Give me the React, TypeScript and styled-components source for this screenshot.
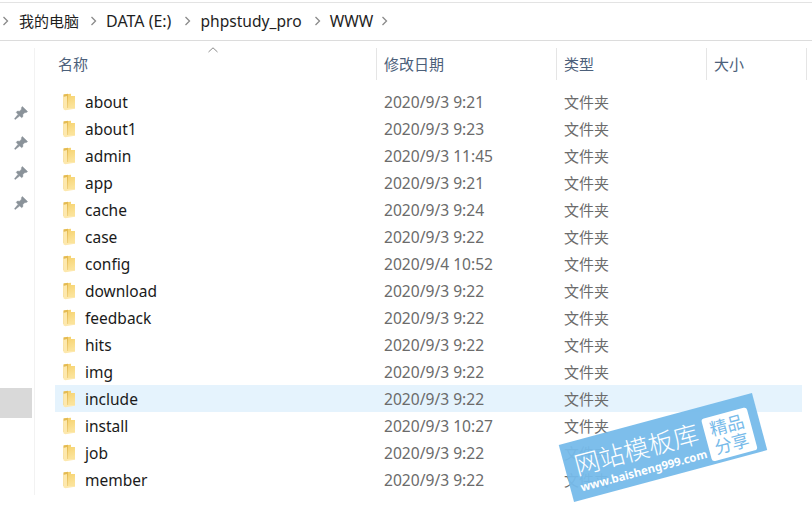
import React from 'react'
import styled, { createGlobalStyle } from 'styled-components'

const Global = createGlobalStyle`
  html, body {
    margin: 0;
    background: #fff;
  }
  body {
    font-family: "Noto Sans", "Noto Sans CJK SC", sans-serif;
    overflow: hidden;
  }
`

const Page = styled.div`
  position: relative;
  width: 812px;
  height: 511px;
  padding-top: 2px;
  box-sizing: border-box;
  overflow: hidden;
`
const Breadcrumb = styled.div`
  display: flex;
  align-items: center;
  height: 35px;
  padding: 0 0 2px 2px;
  border-top: 1px solid #e3e3e3;
  border-bottom: 1px solid #dcdcdc;
  color: #1e1e1e;
`
const Crumb = styled.span<{ $left: number; $right: number; $size?: number }>`
  margin: 0 ${(p) => p.$right}px 0 ${(p) => p.$left}px;
  font-size: ${(p) => p.$size || 15.6}px;
  white-space: nowrap;
`
const Chevron = () => (
  <svg width="7" height="10" viewBox="0 0 7 10" fill="none">
    <path d="M1.5 1 L5.5 5 L1.5 9" stroke="#8a8a8a" strokeWidth="1.3" />
  </svg>
)

const Body = styled.div`
  display: flex;
  padding-top: 7px;
`
const Sidebar = styled.aside`
  width: 34px;
  height: 397px;
  flex: none;
  border-right: 1px solid #f2f2f2;
  padding-top: 50px;
`
const PinSlot = styled.div`
  display: flex;
  align-items: center;
  justify-content: center;
  width: 34px;
  height: 30px;
  padding-left: 8px;
  box-sizing: border-box;
`
const Selected = styled.div`
  width: 32px;
  height: 30px;
  margin-top: 170px;
  background: #d9d9d9;
`
const Pin = () => (
  <svg width="14" height="14" viewBox="0 0 14 14">
    <path
      d="M8.4 0.4 L13.6 5.6 L12 6.8 L11 6.4 L8.8 8.4 L9 10.6 L7.6 11.8 L2.2 6.4 L3.4 5 L5.6 5.2 L7.6 3 L7.2 1.9 Z M4 8.4 L5.6 10 L1.2 13.6 L0.4 12.8 Z"
      fill="#8a9299"
      stroke="#8a9299"
      strokeWidth="0.4"
    />
  </svg>
)

const Main = styled.main`
  flex: 1;
  padding-left: 20px;
`
const Header = styled.div`
  position: relative;
  display: grid;
  grid-template-columns: 322px 180px 150px 100px;
  height: 32px;
  margin-bottom: 8px;
`
const HeaderCell = styled.div<{ $first?: boolean }>`
  display: flex;
  align-items: center;
  height: 32px;
  padding: 0 0 2px ${(p) => (p.$first ? '3px' : '7px')};
  box-sizing: border-box;
  border-right: 1px solid #e5e5e5;
  font-size: 15px;
  color: #4c607a;
`
const SortCaret = styled.svg`
  position: absolute;
  left: 153px;
  top: -1px;
`
const Rows = styled.div`
  display: flex;
  flex-direction: column;
`
const Row = styled.div<{ $active?: boolean }>`
  display: grid;
  grid-template-columns: 322px 180px 150px 1fr;
  align-items: center;
  height: 27px;
  width: 747px;
  background: ${(p) => (p.$active ? '#e5f3fd' : 'transparent')};
`
const NameCell = styled.div`
  display: flex;
  align-items: center;
  gap: 10px;
  padding-left: 8px;
  font-size: 15.5px;
  color: #1a1a1a;
`
const MetaCell = styled.div<{ $size: number }>`
  padding-left: 7px;
  color: #6b6b6b;
  font-size: ${(p) => p.$size}px;
  white-space: nowrap;
`
const Folder = () => (
  <svg width="12" height="18" viewBox="0 0 12 18" style={{ flex: 'none' }}>
    <defs>
      <linearGradient id="fold" x1="0" y1="0" x2="0.3" y2="1">
        <stop offset="0" stopColor="#f5cf66" />
        <stop offset="1" stopColor="#fbe39a" />
      </linearGradient>
    </defs>
    <path d="M0.6 1.4 L8 0.8 L8 3 L12 3 L12 15.4 L0.6 15.4 Z" fill="url(#fold)" />
    <path d="M0.6 1.4 L5 0.8 L5 15 L0.6 15 Z" fill="#e4ba52" />
    <path d="M0.2 4 L4 3 L4.5 15 L12 15 L12 15.8 L2.4 17.2 L0.6 16.6 Z" fill="#fde8ad" />
  </svg>
)

const Watermark = styled.div`
  position: absolute;
  left: 563px;
  top: 418px;
  width: 200px;
  height: 59px;
  display: flex;
  justify-content: space-between;
  padding: 0 9px 3px 10px;
  box-sizing: border-box;
  background: rgba(118, 186, 234, 0.95);
  transform: rotate(-15deg);
  color: #fff;
`
const MarkText = styled.div`
  display: flex;
  flex-direction: column;
  justify-content: flex-end;
  padding-bottom: 2px;
`
const MarkTitle = styled.div`
  font-size: 25.5px;
  line-height: 30px;
  font-weight: 300;
  white-space: nowrap;
`
const MarkUrl = styled.div`
  font-size: 11.4px;
  line-height: 15px;
  font-weight: 700;
  white-space: nowrap;
`
const MarkBadge = styled.div`
  align-self: flex-end;
  flex: none;
  width: 47px;
  height: 44px;
  border-radius: 3px;
  background: #fff;
  color: #78bbea;
  font-size: 17.5px;
  line-height: 19px;
  text-align: center;
  padding-top: 3px;
  box-sizing: border-box;
`

const folders: [string, string][] = [
  ['about', '2020/9/3 9:21'],
  ['about1', '2020/9/3 9:23'],
  ['admin', '2020/9/3 11:45'],
  ['app', '2020/9/3 9:21'],
  ['cache', '2020/9/3 9:24'],
  ['case', '2020/9/3 9:22'],
  ['config', '2020/9/4 10:52'],
  ['download', '2020/9/3 9:22'],
  ['feedback', '2020/9/3 9:22'],
  ['hits', '2020/9/3 9:22'],
  ['img', '2020/9/3 9:22'],
  ['include', '2020/9/3 9:22'],
  ['install', '2020/9/3 10:27'],
  ['job', '2020/9/3 9:22'],
  ['member', '2020/9/3 9:22']
]

const App = () => (
  <Page>
    <Global />
    <Breadcrumb>
      <Chevron />
      <Crumb $left={10} $right={11} $size={15}>
        我的电脑
      </Crumb>
      <Chevron />
      <Crumb $left={9} $right={13} $size={16}>
        DATA (E:)
      </Crumb>
      <Chevron />
      <Crumb $left={9} $right={12}>
        phpstudy_pro
      </Crumb>
      <Chevron />
      <Crumb $left={9} $right={8}>
        WWW
      </Crumb>
      <Chevron />
    </Breadcrumb>
    <Body>
      <Sidebar>
        {[0, 1, 2, 3].map((i) => (
          <PinSlot key={i}>
            <Pin />
          </PinSlot>
        ))}
        <Selected />
      </Sidebar>
      <Main>
        <Header>
          <HeaderCell $first>名称</HeaderCell>
          <HeaderCell>修改日期</HeaderCell>
          <HeaderCell>类型</HeaderCell>
          <HeaderCell>大小</HeaderCell>
          <SortCaret width="10" height="6" viewBox="0 0 10 6" fill="none">
            <path d="M0.5 5 L5 0.8 L9.5 5" stroke="#8a8a8a" />
          </SortCaret>
        </Header>
        <Rows>
          {folders.map(([name, date]) => (
            <Row key={name} $active={name === 'include'}>
              <NameCell>
                <Folder />
                {name}
              </NameCell>
              <MetaCell $size={15.6}>{date}</MetaCell>
              <MetaCell $size={15}>文件夹</MetaCell>
            </Row>
          ))}
        </Rows>
      </Main>
    </Body>
    <Watermark>
      <MarkText>
        <MarkTitle>网站模板库</MarkTitle>
        <MarkUrl>www.baisheng999.com</MarkUrl>
      </MarkText>
      <MarkBadge>
        精品
        <br />
        分享
      </MarkBadge>
    </Watermark>
  </Page>
)

export default App
